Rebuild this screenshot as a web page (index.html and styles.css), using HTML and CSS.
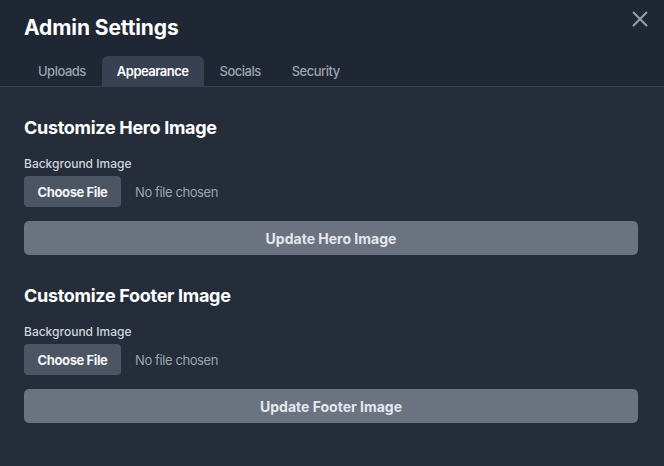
FILE: index.html
```html
<!DOCTYPE html>
<html lang="en">
<head>
<meta charset="utf-8">
<title>Admin Settings</title>
<link rel="stylesheet" href="styles.css">
</head>
<body>
<div class="modal">
  <header class="modal-header">
    <h2 class="modal-title">Admin Settings</h2>
    <button class="close-btn" aria-label="Close">
      <svg width="16" height="16" viewBox="0 0 16 16"><path d="M1.5 1.5 L14.5 14.5 M14.5 1.5 L1.5 14.5" stroke="#9ca3af" stroke-width="1.8" fill="none" stroke-linecap="round"/></svg>
    </button>
    <nav class="tabs">
      <span class="tab">Uploads</span>
      <span class="tab active">Appearance</span>
      <span class="tab">Socials</span>
      <span class="tab">Security</span>
    </nav>
  </header>
  <main class="modal-body">
    <section class="section">
      <h3 class="section-title">Customize Hero Image</h3>
      <label class="field-label">Background Image</label>
      <div class="file-row">
        <span class="file-btn">Choose File</span>
        <span class="file-status">No file chosen</span>
      </div>
      <button class="update-btn">Update Hero Image</button>
    </section>
    <section class="section">
      <h3 class="section-title">Customize Footer Image</h3>
      <label class="field-label">Background Image</label>
      <div class="file-row">
        <span class="file-btn">Choose File</span>
        <span class="file-status">No file chosen</span>
      </div>
      <button class="update-btn">Update Footer Image</button>
    </section>
  </main>
</div>
</body>
</html>
```
FILE: styles.css
```css
* { box-sizing: border-box; }
html, body { margin: 0; padding: 0; }
body {
  background: #252d3b;
  font-family: Inter, "Noto Sans", sans-serif;
  width: 664px;
  height: 466px;
  overflow: hidden;
}
.modal { width: 664px; height: 466px; display: flex; flex-direction: column; }
.modal-header {
  position: relative;
  background: #1f2735;
  border-bottom: 1px solid #374151;
  padding: 14px 0 0 0;
}
.modal-title {
  margin: 0 0 14px 24px;
  font-size: 21px;
  line-height: 28px;
  font-weight: 700;
  letter-spacing: -0.1px;
  color: #ffffff;
}
.close-btn {
  position: absolute;
  top: 11px;
  right: 16px;
  background: none;
  border: 0;
  padding: 0;
  width: 16px;
  height: 16px;
  cursor: pointer;
}
.close-btn svg { display: block; }
.tabs {
  display: flex;
  gap: 1px;
  margin-left: 23px;
}
.tab {
  display: block;
  padding: 0 15px;
  height: 30px;
  line-height: 30px;
  font-size: 13px;
  font-weight: 500;
  letter-spacing: -0.5px;
  color: #9ca3af;
  border-radius: 6px 6px 0 0;
}
.tab.active {
  background: #374151;
  color: #ffffff;
  font-weight: 600;
}
.modal-body {
  padding: 26px 26px 0 24px;
  display: flex;
  flex-direction: column;
  gap: 26px;
}
.section { display: flex; flex-direction: column; }
.section-title {
  margin: 0 0 14px 0;
  padding-top: 1px;
  font-size: 18px;
  line-height: 28px;
  font-weight: 700;
  letter-spacing: -0.3px;
  color: #ffffff;
}
.field-label {
  font-size: 12px;
  line-height: 16px;
  font-weight: 500;
  color: #d1d5db;
  margin-bottom: 4px;
}
.file-row { display: flex; align-items: center; gap: 14px; }
.file-btn {
  display: inline-flex;
  align-items: center;
  justify-content: center;
  width: 97px;
  height: 31px;
  background: #4b5563;
  border-radius: 4px;
  color: #f3f4f6;
  font-size: 13px;
  font-weight: 700;
  letter-spacing: -0.4px;
}
.file-status { font-size: 13px; color: #9ca3af; letter-spacing: -0.4px; }
.update-btn {
  margin-top: 14px;
  height: 34px;
  width: 100%;
  border: 0;
  border-radius: 5px;
  background: #6b7280;
  color: #e5e7eb;
  font-family: Inter, "Noto Sans", sans-serif;
  font-size: 14px;
  font-weight: 700;
}
```
